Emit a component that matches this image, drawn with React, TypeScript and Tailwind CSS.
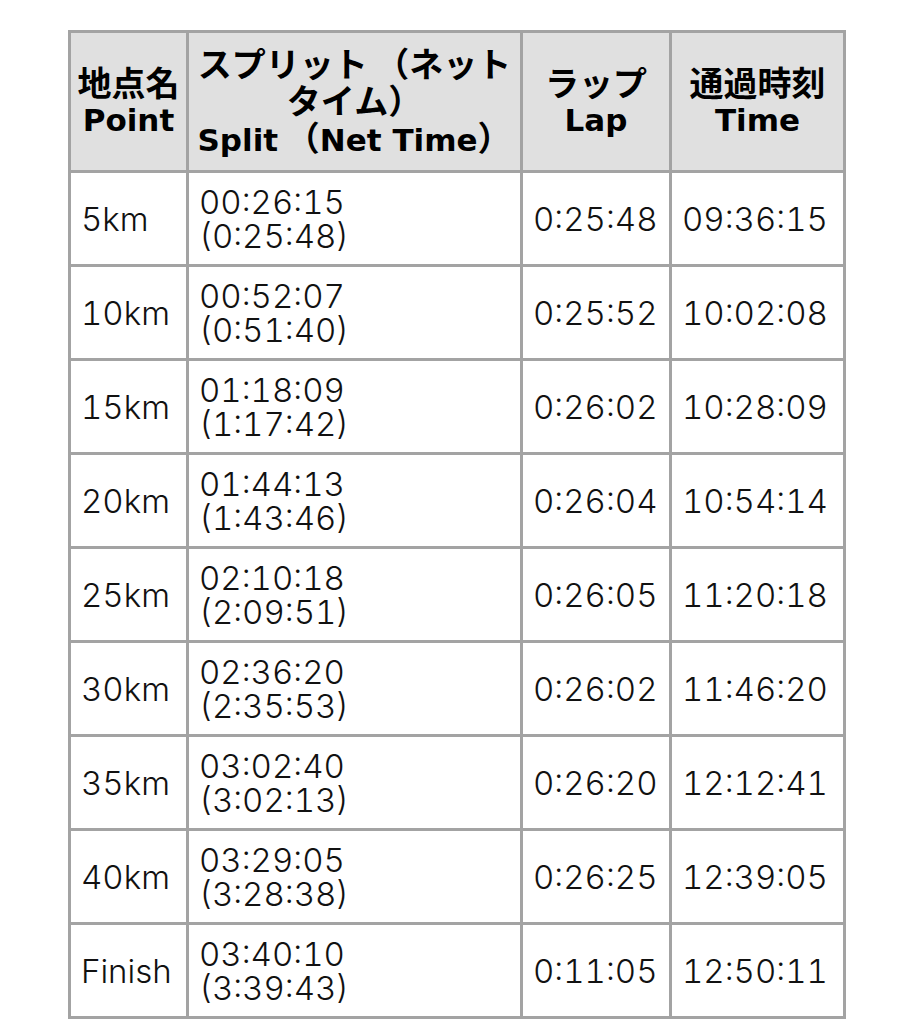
const rows = [
  { point: '5km', split: '00:26:15', net: '(0:25:48)', lap: '0:25:48', time: '09:36:15' },
  { point: '10km', split: '00:52:07', net: '(0:51:40)', lap: '0:25:52', time: '10:02:08' },
  { point: '15km', split: '01:18:09', net: '(1:17:42)', lap: '0:26:02', time: '10:28:09' },
  { point: '20km', split: '01:44:13', net: '(1:43:46)', lap: '0:26:04', time: '10:54:14' },
  { point: '25km', split: '02:10:18', net: '(2:09:51)', lap: '0:26:05', time: '11:20:18' },
  { point: '30km', split: '02:36:20', net: '(2:35:53)', lap: '0:26:02', time: '11:46:20' },
  { point: '35km', split: '03:02:40', net: '(3:02:13)', lap: '0:26:20', time: '12:12:41' },
  { point: '40km', split: '03:29:05', net: '(3:28:38)', lap: '0:26:25', time: '12:39:05' },
  { point: 'Finish', split: '03:40:10', net: '(3:39:43)', lap: '0:11:05', time: '12:50:11' },
];

const th =
  'border-[3px] border-[#a3a3a3] bg-[#e0e0e0] text-center align-middle font-bold text-[31px] text-black p-0 font-["DejaVu_Sans","Noto_Sans_CJK_JP",sans-serif]';
const line = 'h-[37px] leading-[37px] whitespace-nowrap';
const td =
  'border-[3px] border-[#a3a3a3] bg-white align-middle text-[33px] leading-[34px] font-light tabular-nums text-[#111] pl-[10px] pr-0 h-[94px] whitespace-nowrap';
const jp = 'text-[34px] leading-none font-["Noto_Sans_CJK_JP",sans-serif]';

export default function App() {
  return (
    <div className="min-h-[1024px] bg-white pt-[30px] font-['Inter','Noto_Sans_CJK_JP',sans-serif]">
      <table className="mx-auto w-[775px] table-fixed border-collapse">
        <colgroup>
          <col className="w-[118px]" />
          <col className="w-[334px]" />
          <col className="w-[149px]" />
          <col className="w-[174px]" />
        </colgroup>
        <thead>
          <tr>
            <th className={`${th} h-[140px]`}>
              <div className={line}>
                <span className={jp}>地点名</span>
              </div>
              <div className={line}>Point</div>
            </th>
            <th className={th}>
              <div className={line}>
                <span className={jp}>スプリット （ネット</span>
              </div>
              <div className={line}>
                <span className={jp}>タイム）</span>
              </div>
              <div className={line}>
                Split<span className={jp}> （</span>Net Time<span className={jp}>）</span>
              </div>
            </th>
            <th className={th}>
              <div className={line}>
                <span className={jp}>ラップ</span>
              </div>
              <div className={line}>Lap</div>
            </th>
            <th className={th}>
              <div className={line}>
                <span className={jp}>通過時刻</span>
              </div>
              <div className={line}>Time</div>
            </th>
          </tr>
        </thead>
        <tbody>
          {rows.map((r) => (
            <tr key={r.point}>
              <td className={td}>{r.point}</td>
              <td className={td}>
                {r.split}
                <br />
                {r.net}
              </td>
              <td className={td}>{r.lap}</td>
              <td className={td}>{r.time}</td>
            </tr>
          ))}
        </tbody>
      </table>
    </div>
  );
}
